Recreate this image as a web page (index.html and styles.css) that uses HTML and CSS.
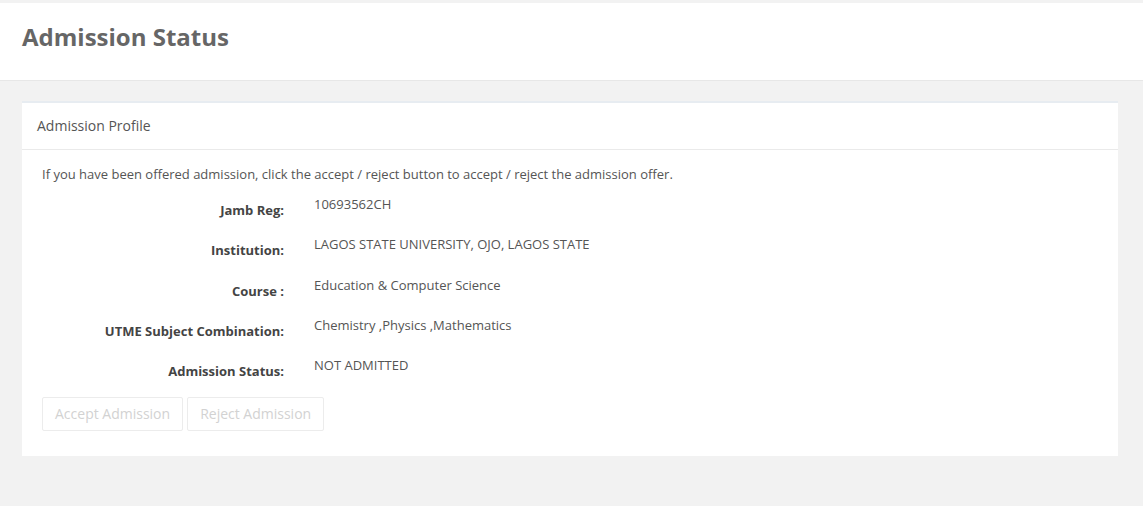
FILE: index.html
```html
<!DOCTYPE html>
<html>
<head>
<meta charset="utf-8">
<link rel="stylesheet" href="styles.css">
</head>
<body>
<div class="page-head">
  <h1 class="page-title">Admission Status</h1>
</div>
<div class="content">
  <div class="panel">
    <div class="panel-heading">Admission Profile</div>
    <div class="panel-body">
      <p class="intro">If you have been offered admission, click the accept / reject button to accept / reject the admission offer.</p>
      <div class="form">
        <div class="label">Jamb Reg:</div><div class="value">10693562CH</div>
        <div class="label">Institution:</div><div class="value">LAGOS STATE UNIVERSITY, OJO, LAGOS STATE</div>
        <div class="label">Course :</div><div class="value">Education &amp; Computer Science</div>
        <div class="label">UTME Subject Combination:</div><div class="value">Chemistry ,Physics ,Mathematics</div>
        <div class="label">Admission Status:</div><div class="value">NOT ADMITTED</div>
      </div>
      <div class="actions">
        <button class="btn" disabled>Accept Admission</button>
        <button class="btn" disabled>Reject Admission</button>
      </div>
    </div>
  </div>
</div>
</body>
</html>
```
FILE: styles.css
```css
* { box-sizing: border-box; }
html, body { margin: 0; padding: 0; }
body {
  background: #f2f2f2;
  font-family: "Open Sans", "Liberation Sans", sans-serif;
  font-size: 13px;
  color: #555;
  padding-top: 3px;
  height: 506px;
  overflow: hidden;
}
.page-head {
  background: #fff;
  height: 78px;
  border-bottom: 1px solid #e7e7e7;
  padding: 19px 22px 0;
}
.page-title {
  margin: 0;
  font-size: 24px;
  font-weight: 700;
  line-height: 30px;
  color: #666;
}
.content {
  padding: 20px 25px 0 22px;
}
.panel {
  background: #fff;
  border-top: 2px solid #e7ecf1;
}
.panel-heading {
  height: 47px;
  border-bottom: 1px solid #eaeaea;
  padding: 0 15px;
  font-size: 14px;
  line-height: 46px;
  color: #555;
}
.panel-body {
  padding: 15px 20px 25px;
}
.intro {
  margin: 0 0 11px;
  line-height: 18px;
  color: #555;
}
.form {
  display: grid;
  grid-template-columns: 242px 1fr;
  column-gap: 30px;
  grid-auto-rows: 40.3px;
}
.label {
  text-align: right;
  font-weight: 700;
  color: #444;
  line-height: 20px;
  padding-top: 6px;
}
.value {
  line-height: 20px;
  color: #555;
}
.actions {
  display: flex;
  gap: 4px;
  margin-top: 2px;
}
.btn {
  font-family: "Open Sans", "Liberation Sans", sans-serif;
  font-size: 14px;
  line-height: 20px;
  height: 34px;
  padding: 6px 12px;
  background: #fff;
  border: 1px solid #ececec;
  border-radius: 2px;
  color: #d2d2d2;
}
```
